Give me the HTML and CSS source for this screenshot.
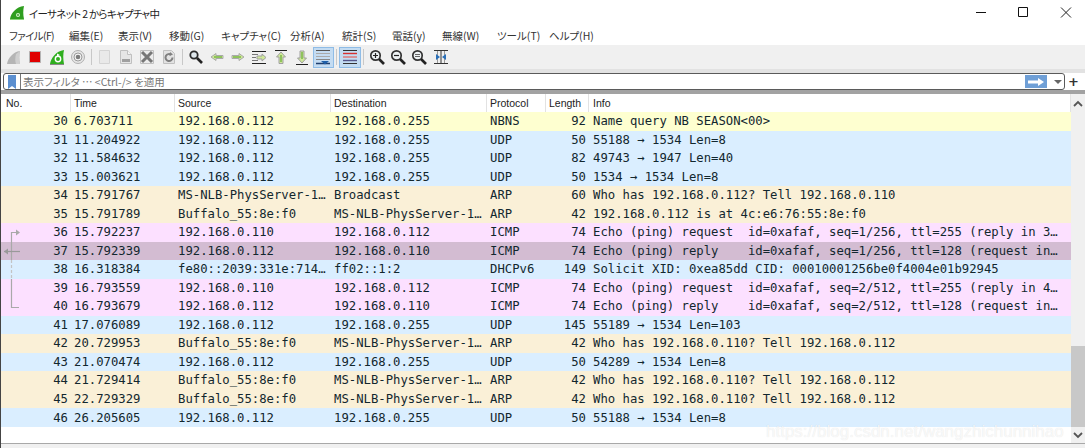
FILE: index.html
```html
<!DOCTYPE html>
<html lang="ja">
<head>
<meta charset="utf-8">
<title>Wireshark</title>
<link rel="stylesheet" href="styles.css">
</head>
<body>
<div class="window">
  <header class="titlebar">
    <svg class="appicon" width="16" height="16" viewBox="0 0 16 16"><path d="M1 14C2 8 7 2 15 1c-1 4-1 9 0 13z" fill="#2f9e1f"/><path d="M1 14h14v1H1z" fill="#8bd47a"/><circle cx="9" cy="10" r="2" fill="#d8f2d0"/><circle cx="9" cy="10" r=".9" fill="#2f9e1f"/></svg>
    <span class="title">イーサネット 2 からキャプチャ中</span>
    <div class="winbtns">
      <svg width="42" height="26" viewBox="0 0 42 26"><path d="M17 12.500h10" stroke="#111" fill="none"/></svg>
      <svg width="42" height="26" viewBox="0 0 42 26"><path d="M17.500 7.500h9v9h-9z" stroke="#111" fill="none"/></svg>
      <svg width="42" height="26" viewBox="0 0 42 26"><path d="M18 7.500l10 10M28 7.500l-10 10" stroke="#222" fill="none"/></svg>
    </div>
  </header>
  <nav class="menubar">
    <span class="mi m1">ファイル(F)</span><span class="mi m2">編集(E)</span><span class="mi m3">表示(V)</span><span class="mi m4">移動(G)</span><span class="mi m5">キャプチャ(C)</span><span class="mi m6">分析(A)</span><span class="mi m7">統計(S)</span><span class="mi m8">電話(y)</span><span class="mi m9">無線(W)</span><span class="mi m10">ツール(T)</span><span class="mi m11">ヘルプ(H)</span>
  </nav>
  <div class="toolbar">
    <span class="tb"><svg width="16" height="16" viewBox="0 0 16 16"><path d="M1 15C2 9 7 3 14 2c-1 4-1 9 0 13z" fill="#b5b5b5"/><path d="M10 5c-1 4-1 7 0 10h4c-1-4-1-9 0-13z" fill="#cfcfcf"/></svg></span>
    <span class="tb"><svg width="16" height="16" viewBox="0 0 16 16"><path d="M2.500 2.500h11v11h-11z" fill="#e00000" stroke="#b4b4b4"/></svg></span>
    <span class="tb"><svg width="16" height="16" viewBox="0 0 16 16"><path d="M1 15C2 9 7 2 15 1c-1 4-1 9 0 14z" fill="#2fae1f"/><path d="M1 15h14v1H1z" fill="#8a8a8a"/><circle cx="9" cy="10" r="2.700" fill="none" stroke="#fff" stroke-width="1.400"/><path d="M8 4.500l3 1.500-3 1.500z" fill="#fff"/></svg></span>
    <span class="tb"><svg width="16" height="16" viewBox="0 0 16 16"><circle cx="8" cy="8" r="6.500" fill="#e6e6e6" stroke="#b0b0b0"/><circle cx="8" cy="8" r="4" fill="#f6f6f6" stroke="#9a9a9a"/><circle cx="8" cy="8" r="2.300" fill="#7d7d7d"/></svg></span>
    <i class="sep"></i>
    <span class="tb"><svg width="16" height="16" viewBox="0 0 16 16"><path d="M2.500 1.500h10v13h-10z" fill="#e9e9e9" stroke="#d4d4d4"/></svg></span>
    <span class="tb"><svg width="16" height="16" viewBox="0 0 16 16"><path d="M2.500 1.500h7l4 4v9h-11z" fill="#e6e6e6" stroke="#c0c0c0"/><path d="M9.500 1.500v4h4" fill="#f5f5f5" stroke="#c0c0c0"/><path d="M4 10h8v3H4z" fill="#a0a0a0"/></svg></span>
    <span class="tb"><svg width="16" height="16" viewBox="0 0 16 16"><path d="M1.500 1.500h13v13h-13z" fill="#ececec" stroke="#c0c0c0"/><path d="M3 3l10 10M13 3L3 13" stroke="#777" stroke-width="3" fill="none"/></svg></span>
    <span class="tb"><svg width="16" height="16" viewBox="0 0 16 16"><path d="M2.500 1.500h8l3 3v10h-11z" fill="#e2e2e2" stroke="#c0c0c0"/><path d="M11.500 8.500a3.500 3.500 0 1 1-1.300-2.700" fill="none" stroke="#808080" stroke-width="2"/><path d="M9 3l3 2.500-3.500 1.500z" fill="#808080"/></svg></span>
    <i class="sep"></i>
    <span class="tb"><svg width="16" height="16" viewBox="0 0 16 16"><circle cx="6" cy="6" r="3.700" fill="#dfe7ec" stroke="#2b2b2b" stroke-width="1.800"/><path d="M9 9l5 5" stroke="#222" stroke-width="2.600" fill="none"/></svg></span>
    <span class="tb"><svg width="16" height="16" viewBox="0 0 16 16"><path d="M2 8l5-3.500V6.500h7v3H7v2z" fill="#cfe89a" stroke="#a9a9a9"/><path d="M5 8h8" stroke="#4f9e1f" fill="none"/></svg></span>
    <span class="tb"><svg width="16" height="16" viewBox="0 0 16 16"><path d="M14 8L9 4.500V6.500H2v3h7v2z" fill="#cfe89a" stroke="#a9a9a9"/><path d="M3 8h8" stroke="#4f9e1f" fill="none"/></svg></span>
    <span class="tb"><svg width="16" height="16" viewBox="0 0 16 16"><path d="M1 2.500h14M1 14.500h14" stroke="#222" fill="none"/><path d="M1 5.500h6M1 8.500h4M1 11.500h6" stroke="#777" fill="none"/><path d="M6 7h5V5l4 3.500-4 3.500v-2H6z" fill="#cfe89a" stroke="#a0a0a0"/></svg></span>
    <span class="tb"><svg width="16" height="16" viewBox="0 0 16 16"><path d="M2 1.500h12" stroke="#222" fill="none"/><path d="M8 3l4.500 5H10v6.500H6V8H3.500z" fill="#cfe89a" stroke="#a0a0a0"/><path d="M8 6v7" stroke="#4f9e1f" fill="none"/></svg></span>
    <span class="tb"><svg width="16" height="16" viewBox="0 0 16 16"><path d="M2 15.500h12" stroke="#222" fill="none"/><path d="M8 14l4.500-5H10V2H6v7H3.500z" fill="#cfe89a" stroke="#a0a0a0"/><path d="M8 3v7" stroke="#4f9e1f" fill="none"/></svg></span>
    <span class="tb on"><svg width="16" height="16" viewBox="0 0 16 16"><path d="M1 1.500h14" stroke="#555" fill="none"/><path d="M1 4.500h14M1 7.500h14" stroke="#aaa" fill="none"/><path d="M1 10.500h14" stroke="#888" fill="none"/><path d="M1 14.500h14" stroke="#1f3f6e" stroke-width="1.500" fill="none"/><path d="M6 12h8l-4 3.500z" fill="#1f5fa8"/></svg></span>
    <i class="sep"></i>
    <span class="tb on"><svg width="16" height="16" viewBox="0 0 16 16"><path d="M1 1.500h14M1 14.500h14" stroke="#333" fill="none"/><path d="M1 4.500h14" stroke="#d83030" stroke-width="1.400" fill="none"/><path d="M1 8h14" stroke="#e07070" stroke-width="1.400" fill="none"/><path d="M1 11.500h14" stroke="#55558a" stroke-width="1.400" fill="none"/></svg></span>
    <i class="sep"></i>
    <span class="tb"><svg width="16" height="16" viewBox="0 0 16 16"><circle cx="6.500" cy="6.500" r="4.700" fill="#eef2f4" stroke="#333" stroke-width="1.700"/><path d="M10 10l5 5" stroke="#222" stroke-width="2.600" fill="none"/><path d="M4 6.500h5M6.500 4v5" stroke="#222" stroke-width="1.200" fill="none"/></svg></span>
    <span class="tb"><svg width="16" height="16" viewBox="0 0 16 16"><circle cx="6.500" cy="6.500" r="4.700" fill="#eef2f4" stroke="#333" stroke-width="1.700"/><path d="M10 10l5 5" stroke="#222" stroke-width="2.600" fill="none"/><path d="M4 6.500h5" stroke="#222" stroke-width="1.200" fill="none"/></svg></span>
    <span class="tb"><svg width="16" height="16" viewBox="0 0 16 16"><circle cx="6.500" cy="6.500" r="4.700" fill="#eef2f4" stroke="#333" stroke-width="1.700"/><path d="M10 10l5 5" stroke="#222" stroke-width="2.600" fill="none"/><path d="M4 5.500h5M4 7.500h5" stroke="#666" fill="none"/></svg></span>
    <span class="tb"><svg width="16" height="16" viewBox="0 0 16 16"><path d="M1 1.500h14M1 14.500h14" stroke="#333" fill="none"/><path d="M4.500 2v12M11.500 2v12" stroke="#999" fill="none"/><path d="M8 2v12" stroke="#333" fill="none"/><path d="M7 8L3 5v6zM9 8l4-3v6z" fill="#2a6fb8"/></svg></span>
  </div>
  <div class="filterwrap">
    <div class="filter">
      <span class="bm"><svg width="10" height="14" viewBox="0 0 10 14"><path d="M1 0h8v14l-4-3-4 3z" fill="#5b8fd0"/></svg></span>
      <span class="ftext">表示フィルタ … &lt;Ctrl-/&gt; を適用</span>
      <span class="go"><svg width="18" height="10" viewBox="0 0 18 10"><path d="M1 3.500h10V1l6 4-6 4V6.500H1z" fill="#fff"/></svg></span>
      <span class="caret"></span>
    </div>
    <span class="plus">+</span>
  </div>
  <div class="listarea">
    <div class="list">
      <div class="head"><span class="c no">No.</span><span class="c time">Time</span><span class="c src">Source</span><span class="c dst">Destination</span><span class="c proto">Protocol</span><span class="c len">Length</span><span class="c info">Info</span></div>
      <div class="row nbns"><span class="c no">30</span><span class="c time">6.703711</span><span class="c src">192.168.0.112</span><span class="c dst">192.168.0.255</span><span class="c proto">NBNS</span><span class="c len">92</span><span class="c info">Name query NB SEASON&lt;00&gt;</span></div>
      <div class="row udp"><span class="c no">31</span><span class="c time">11.204922</span><span class="c src">192.168.0.112</span><span class="c dst">192.168.0.255</span><span class="c proto">UDP</span><span class="c len">50</span><span class="c info">55188 → 1534 Len=8</span></div>
      <div class="row udp"><span class="c no">32</span><span class="c time">11.584632</span><span class="c src">192.168.0.112</span><span class="c dst">192.168.0.255</span><span class="c proto">UDP</span><span class="c len">82</span><span class="c info">49743 → 1947 Len=40</span></div>
      <div class="row udp"><span class="c no">33</span><span class="c time">15.003621</span><span class="c src">192.168.0.112</span><span class="c dst">192.168.0.255</span><span class="c proto">UDP</span><span class="c len">50</span><span class="c info">1534 → 1534 Len=8</span></div>
      <div class="row arp"><span class="c no">34</span><span class="c time">15.791767</span><span class="c src">MS-NLB-PhysServer-1…</span><span class="c dst">Broadcast</span><span class="c proto">ARP</span><span class="c len">60</span><span class="c info">Who has 192.168.0.112? Tell 192.168.0.110</span></div>
      <div class="row arp"><span class="c no">35</span><span class="c time">15.791789</span><span class="c src">Buffalo_55:8e:f0</span><span class="c dst">MS-NLB-PhysServer-1…</span><span class="c proto">ARP</span><span class="c len">42</span><span class="c info">192.168.0.112 is at 4c:e6:76:55:8e:f0</span></div>
      <div class="row icmp"><span class="c no">36</span><span class="c time">15.792237</span><span class="c src">192.168.0.110</span><span class="c dst">192.168.0.112</span><span class="c proto">ICMP</span><span class="c len">74</span><span class="c info">Echo (ping) request  id=0xafaf, seq=1/256, ttl=255 (reply in 3…</span></div>
      <div class="row sel"><span class="c no">37</span><span class="c time">15.792339</span><span class="c src">192.168.0.112</span><span class="c dst">192.168.0.110</span><span class="c proto">ICMP</span><span class="c len">74</span><span class="c info">Echo (ping) reply    id=0xafaf, seq=1/256, ttl=128 (request in…</span></div>
      <div class="row udp"><span class="c no">38</span><span class="c time">16.318384</span><span class="c src">fe80::2039:331e:714…</span><span class="c dst">ff02::1:2</span><span class="c proto">DHCPv6</span><span class="c len">149</span><span class="c info">Solicit XID: 0xea85dd CID: 00010001256be0f4004e01b92945</span></div>
      <div class="row icmp"><span class="c no">39</span><span class="c time">16.793559</span><span class="c src">192.168.0.110</span><span class="c dst">192.168.0.112</span><span class="c proto">ICMP</span><span class="c len">74</span><span class="c info">Echo (ping) request  id=0xafaf, seq=2/512, ttl=255 (reply in 4…</span></div>
      <div class="row icmp"><span class="c no">40</span><span class="c time">16.793679</span><span class="c src">192.168.0.112</span><span class="c dst">192.168.0.110</span><span class="c proto">ICMP</span><span class="c len">74</span><span class="c info">Echo (ping) reply    id=0xafaf, seq=2/512, ttl=128 (request in…</span></div>
      <div class="row udp"><span class="c no">41</span><span class="c time">17.076089</span><span class="c src">192.168.0.112</span><span class="c dst">192.168.0.255</span><span class="c proto">UDP</span><span class="c len">145</span><span class="c info">55189 → 1534 Len=103</span></div>
      <div class="row arp"><span class="c no">42</span><span class="c time">20.729953</span><span class="c src">Buffalo_55:8e:f0</span><span class="c dst">MS-NLB-PhysServer-1…</span><span class="c proto">ARP</span><span class="c len">42</span><span class="c info">Who has 192.168.0.110? Tell 192.168.0.112</span></div>
      <div class="row udp"><span class="c no">43</span><span class="c time">21.070474</span><span class="c src">192.168.0.112</span><span class="c dst">192.168.0.255</span><span class="c proto">UDP</span><span class="c len">50</span><span class="c info">54289 → 1534 Len=8</span></div>
      <div class="row arp"><span class="c no">44</span><span class="c time">21.729414</span><span class="c src">Buffalo_55:8e:f0</span><span class="c dst">MS-NLB-PhysServer-1…</span><span class="c proto">ARP</span><span class="c len">42</span><span class="c info">Who has 192.168.0.110? Tell 192.168.0.112</span></div>
      <div class="row arp"><span class="c no">45</span><span class="c time">22.729329</span><span class="c src">Buffalo_55:8e:f0</span><span class="c dst">MS-NLB-PhysServer-1…</span><span class="c proto">ARP</span><span class="c len">42</span><span class="c info">Who has 192.168.0.110? Tell 192.168.0.112</span></div>
      <div class="row udp"><span class="c no">46</span><span class="c time">26.205605</span><span class="c src">192.168.0.112</span><span class="c dst">192.168.0.255</span><span class="c proto">UDP</span><span class="c len">50</span><span class="c info">55188 → 1534 Len=8</span></div>
      <svg class="related" width="20" height="90" viewBox="0 0 20 90"><path d="M15 8.500h-4.500V36M10.500 55V83.500H18" fill="none" stroke="#a9a9a9" stroke-width="1.200"/><path d="M10.500 36V55" fill="none" stroke="#c4c4c4" stroke-width="1.200" stroke-dasharray="3 2"/><path d="M15 5.500l4 3-4 3z" fill="#a9a9a9"/><path d="M3 27.500h16" stroke="#999" stroke-width="1.200" fill="none"/><path d="M7 24.500l-4 3 4 3z" fill="#999"/></svg>
    </div>
    <div class="scroll">
      <span class="arrow"><svg width="10" height="7" viewBox="0 0 10 7"><path d="M1 6l4-4 4 4" fill="none" stroke="#555" stroke-width="1.800"/></svg></span>
      <span class="track"></span>
      <span class="thumb"></span>
      <span class="arrow dn"><svg width="10" height="7" viewBox="0 0 10 7"><path d="M1 1l4 4 4-4" fill="none" stroke="#555" stroke-width="1.800"/></svg></span>
    </div>
  </div>
  <div class="bottom"></div>
  <div class="watermark">https://blog.csdn.net/wangzhichunnihao</div>
</div>
</body>
</html>
```
FILE: styles.css
```css
* { box-sizing: border-box; }
html, body { margin: 0; padding: 0; }
body { width: 1085px; height: 448px; overflow: hidden; background: #fff; }
.window {
  position: relative;
  width: 1085px;
  height: 448px;
  display: flex;
  flex-direction: column;
  font-family: "Noto Sans CJK JP", "Noto Sans", sans-serif;
  font-feature-settings: "palt";
  color: #222;
  border-left: 1px solid #444;
  overflow: hidden;
}
.titlebar { height: 26px; display: flex; align-items: center; padding-left: 8px; flex: none; }
.appicon { flex: none; }
.title { margin-left: 4px; font-size: 10.500px; letter-spacing: -.7px; color: #222; }
.winbtns { margin-left: auto; display: flex; }
.winbtns svg { display: block; }
.menubar { height: 19px; flex: none; display: flex; align-items: center; font-size: 10.500px; padding-left: 8px; color: #333; }
.mi { white-space: nowrap; flex: none; }
.m1 { width: 60px; letter-spacing: -.6px; } .m2 { width: 49px; } .m3 { width: 51px; } .m4 { width: 52px; } .m5 { width: 69px; }
.m6 { width: 52px; } .m7 { width: 50px; } .m8 { width: 50px; } .m9 { width: 55px; } .m10 { width: 52px; }
.toolbar { height: 24px; flex: none; background: #f0f0f0; display: flex; align-items: center; padding-left: 2.500px; }
.tb { width: 21.300px; height: 21px; flex: none; display: flex; align-items: center; justify-content: center; }
.tb svg { display: block; }
.tb.on { background: #c4dcf2; border: 1px solid #8fbce6; }
.sep { width: 1px; height: 16px; margin: 0 2.250px; flex: none; background: #c8c8c8; }
.filterwrap { height: 25px; flex: none; display: flex; align-items: center; background: #fff; border-top: 4px solid #e2e2e2; border-bottom: 4px solid #a2a2a2; padding-left: 2px; position: relative; }
.filter { width: 1062px; height: 17px; border: 1px solid #5a5a5a; border-radius: 3px; display: flex; align-items: center; background: #fff; }
.bm { width: 17px; height: 15px; border-right: 1px solid #777; display: flex; align-items: center; justify-content: center; flex: none; }
.ftext { font-size: 10.500px; color: #777; margin-left: 2px; white-space: nowrap; flex: 1; }
.go { width: 22px; height: 13px; background: #6f9fd6; display: flex; align-items: center; justify-content: center; flex: none; }
.caret { width: 0; height: 0; border: 4px solid transparent; border-top: 4px solid #666; border-bottom: 0; margin: 0 2px 0 7px; flex: none; }
.plus { font-family: "DejaVu Sans", sans-serif; font-weight: 700; font-size: 13px; color: #333; margin-left: 3px; line-height: 1; }
.listarea { flex: none; display: flex; height: 349px; }
.list { position: relative; width: 1070px; flex: none; }
.head { height: 18px; display: grid; grid-template-columns: 70px 104px 156px 156px 59px 43px 1fr; font-family: "Liberation Sans", sans-serif; font-size: 10.500px; color: #222; align-items: center; background: #fff; }
.head .c { height: 18px; line-height: 18px; padding-left: 3px; border-right: 1px solid #e2e2e2; }
.head .no { padding-left: 5px; }
.head .info { padding-left: 4px; }
.row { height: 18.530px; padding-top: 1px; display: grid; grid-template-columns: 70px 104px 156px 156px 59px 43px 1fr; align-items: center; font-family: "DejaVu Sans Mono", monospace; font-size: 12.250px; font-feature-settings: normal; color: #12272e; white-space: pre; }
.row .c { overflow: hidden; line-height: 17px; }
.row .no { text-align: right; padding-right: 3px; }
.row .time, .row .src, .row .dst, .row .proto { padding-left: 3px; }
.row .info { padding-left: 4px; }
.row .len { text-align: right; padding-right: 3px; }
.nbns { background: #feffd0; }
.udp { background: #daeeff; }
.arp { background: #faf0d7; }
.icmp { background: #fce0ff; }
.sel { background: #d3bcd2; }
.related { position: absolute; left: 0; top: 130px; }
.scroll { width: 14px; flex: none; margin-left: 0; background: #f0f0f0; display: flex; flex-direction: column; }
.arrow { height: 18px; flex: none; display: flex; align-items: center; justify-content: center; }
.arrow.dn { height: 16px; }
.track { height: 234px; flex: none; }
.thumb { height: 81px; flex: none; background: #c8c8c8; }
.bottom { height: 6px; flex: none; background: #f0f0f0; border-top: 1px solid #a8a8a8; }
.watermark { position: absolute; left: 765px; top: 422px; font-family: "Liberation Sans", sans-serif; font-size: 17px; color: rgba(255,255,255,.75); text-shadow: 0 0 1px rgba(0,0,0,.12); white-space: nowrap; }
```
